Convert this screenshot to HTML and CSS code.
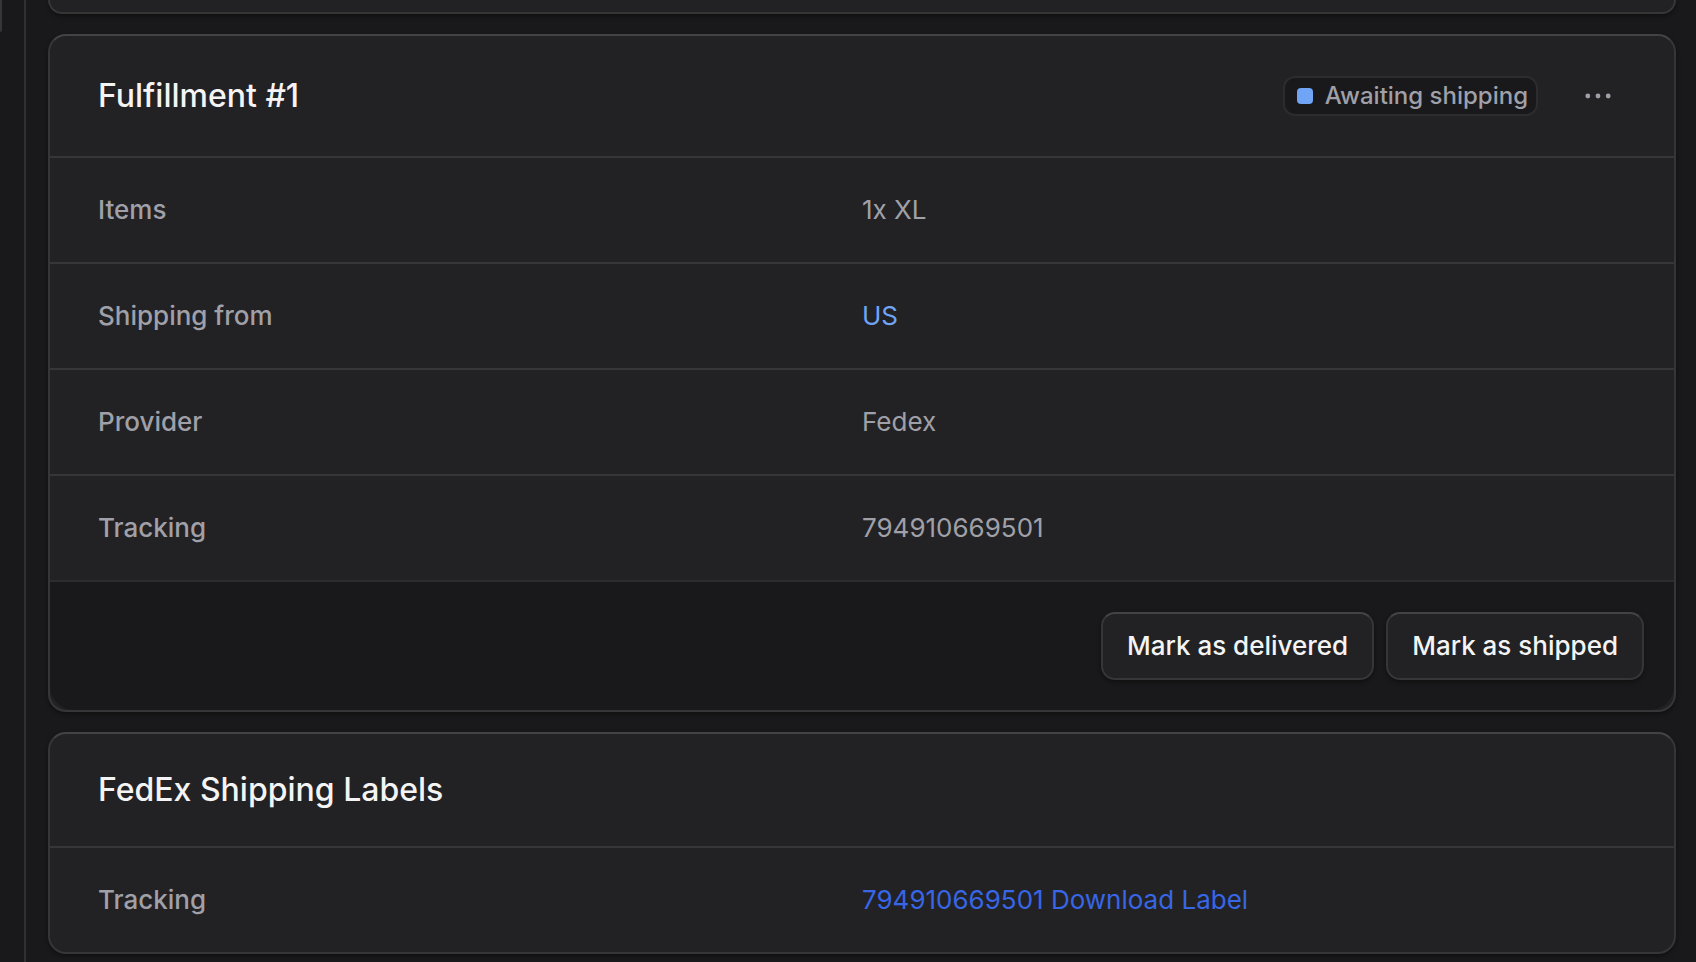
FILE: index.html
```
<!DOCTYPE html>
<html lang="en">
<head>
<meta charset="utf-8">
<meta name="viewport" content="width=device-width, initial-scale=1">
<title>Fulfillment #1</title>
<link rel="stylesheet" href="styles.css">
</head>
<body>
<div class="shell">
  <aside class="sidebar"><div class="sidebar-item"></div></aside>
  <main class="content">
    <section class="card card-previous"></section>

    <section class="card">
      <header class="card-header">
        <h2 class="card-title">Fulfillment #1</h2>
        <div class="card-actions">
          <span class="badge"><span class="badge-dot"></span>Awaiting shipping</span>
          <button class="icon-button" type="button" aria-label="More actions">
            <svg width="30" height="30" viewBox="0 0 30 30" fill="currentColor" aria-hidden="true">
              <circle cx="4.8" cy="15" r="2.4"/><circle cx="15" cy="15" r="2.4"/><circle cx="25.2" cy="15" r="2.4"/>
            </svg>
          </button>
        </div>
      </header>
      <dl class="rows">
        <div class="row"><dt>Items</dt><dd>1x XL</dd></div>
        <div class="row"><dt>Shipping from</dt><dd><a class="link" href="#">US</a></dd></div>
        <div class="row"><dt>Provider</dt><dd>Fedex</dd></div>
        <div class="row"><dt>Tracking</dt><dd>794910669501</dd></div>
      </dl>
      <footer class="card-footer">
        <button class="button" type="button">Mark as delivered</button>
        <button class="button" type="button">Mark as shipped</button>
      </footer>
    </section>

    <section class="card">
      <header class="card-header">
        <h2 class="card-title">FedEx Shipping Labels</h2>
      </header>
      <dl class="rows">
        <div class="row"><dt>Tracking</dt><dd><a class="link link-strong" href="#">794910669501 Download Label</a></dd></div>
      </dl>
    </section>
  </main>
</div>
</body>
</html>
```
FILE: styles.css
```
:root {
  --bg: #19191b;
  --surface: #222224;
  --line: #363638;
  --line-top: #434345;
  --text: #f4f4f5;
  --muted: #a0a0a9;
  --blue: #70a4f5;
  --blue-strong: #3766e6;
}

* { box-sizing: border-box; }

body {
  margin: 0;
  background: var(--bg);
  color: var(--muted);
  font-family: Inter, "Liberation Sans", sans-serif;
  font-size: 26px;
  line-height: 40px;
  -webkit-font-smoothing: antialiased;
}

.shell {
  display: flex;
  min-height: 100vh;
  overflow: hidden;
}

.sidebar {
  flex: none;
  width: 26px;
  border-right: 2px solid #303032;
}

.sidebar-item {
  width: 2px;
  height: 32px;
  background: var(--line);
  border-bottom-right-radius: 2px;
}

.content {
  flex: 1;
  min-width: 0;
  display: flex;
  flex-direction: column;
  gap: 20px;
  padding: 0 20px 4px 22px;
}

.card {
  background: var(--surface);
  border: 2px solid var(--line);
  border-top-color: var(--line-top);
  border-radius: 18px;
  box-shadow: 0 2px 4px rgba(0, 0, 0, 0.4);
}

.card-previous {
  height: 14px;
  border-top: 0;
  border-radius: 0 0 18px 18px;
}

.card-header {
  display: flex;
  align-items: center;
  justify-content: space-between;
  padding: 32px 48px;
}

.card-title {
  margin: 0;
  color: var(--text);
  font-size: 32px;
  font-weight: 500;
  line-height: 48px;
}

.card-actions {
  display: flex;
  align-items: center;
  gap: 32px;
}

.badge {
  display: flex;
  align-items: center;
  gap: 12px;
  padding: 0 8px 0 12px;
  background: var(--bg);
  border: 2px solid #2c2c2e;
  border-radius: 12px;
  font-size: 24px;
  font-weight: 500;
  line-height: 36px;
}

.badge-dot {
  width: 16px;
  height: 16px;
  border-radius: 4px;
  background: var(--blue);
}

.icon-button {
  display: grid;
  place-items: center;
  width: 56px;
  height: 56px;
  padding: 0;
  border: 0;
  border-radius: 12px;
  background: none;
  color: var(--muted);
}

.rows { margin: 0; }

.row {
  display: grid;
  grid-template-columns: 1fr 1fr;
  padding: 32px 48px;
  border-top: 2px solid var(--line);
}

.row dt { font-weight: 500; }
.row dd { margin: 0; }

.link {
  color: var(--blue);
  text-decoration: none;
}

.link-strong { color: var(--blue-strong); }

.card-footer {
  display: flex;
  justify-content: flex-end;
  gap: 12px;
  padding: 30px;
  background: var(--bg);
  border-top: 2px solid #2c2c2e;
  border-radius: 0 0 24px 24px;
}

.button {
  padding: 12px 24px;
  background: var(--surface);
  border: 2px solid var(--line);
  border-top-color: var(--line-top);
  border-radius: 14px;
  box-shadow: 0 2px 4px rgba(0, 0, 0, 0.4);
  color: var(--text);
  font: inherit;
  font-weight: 500;
}
```
